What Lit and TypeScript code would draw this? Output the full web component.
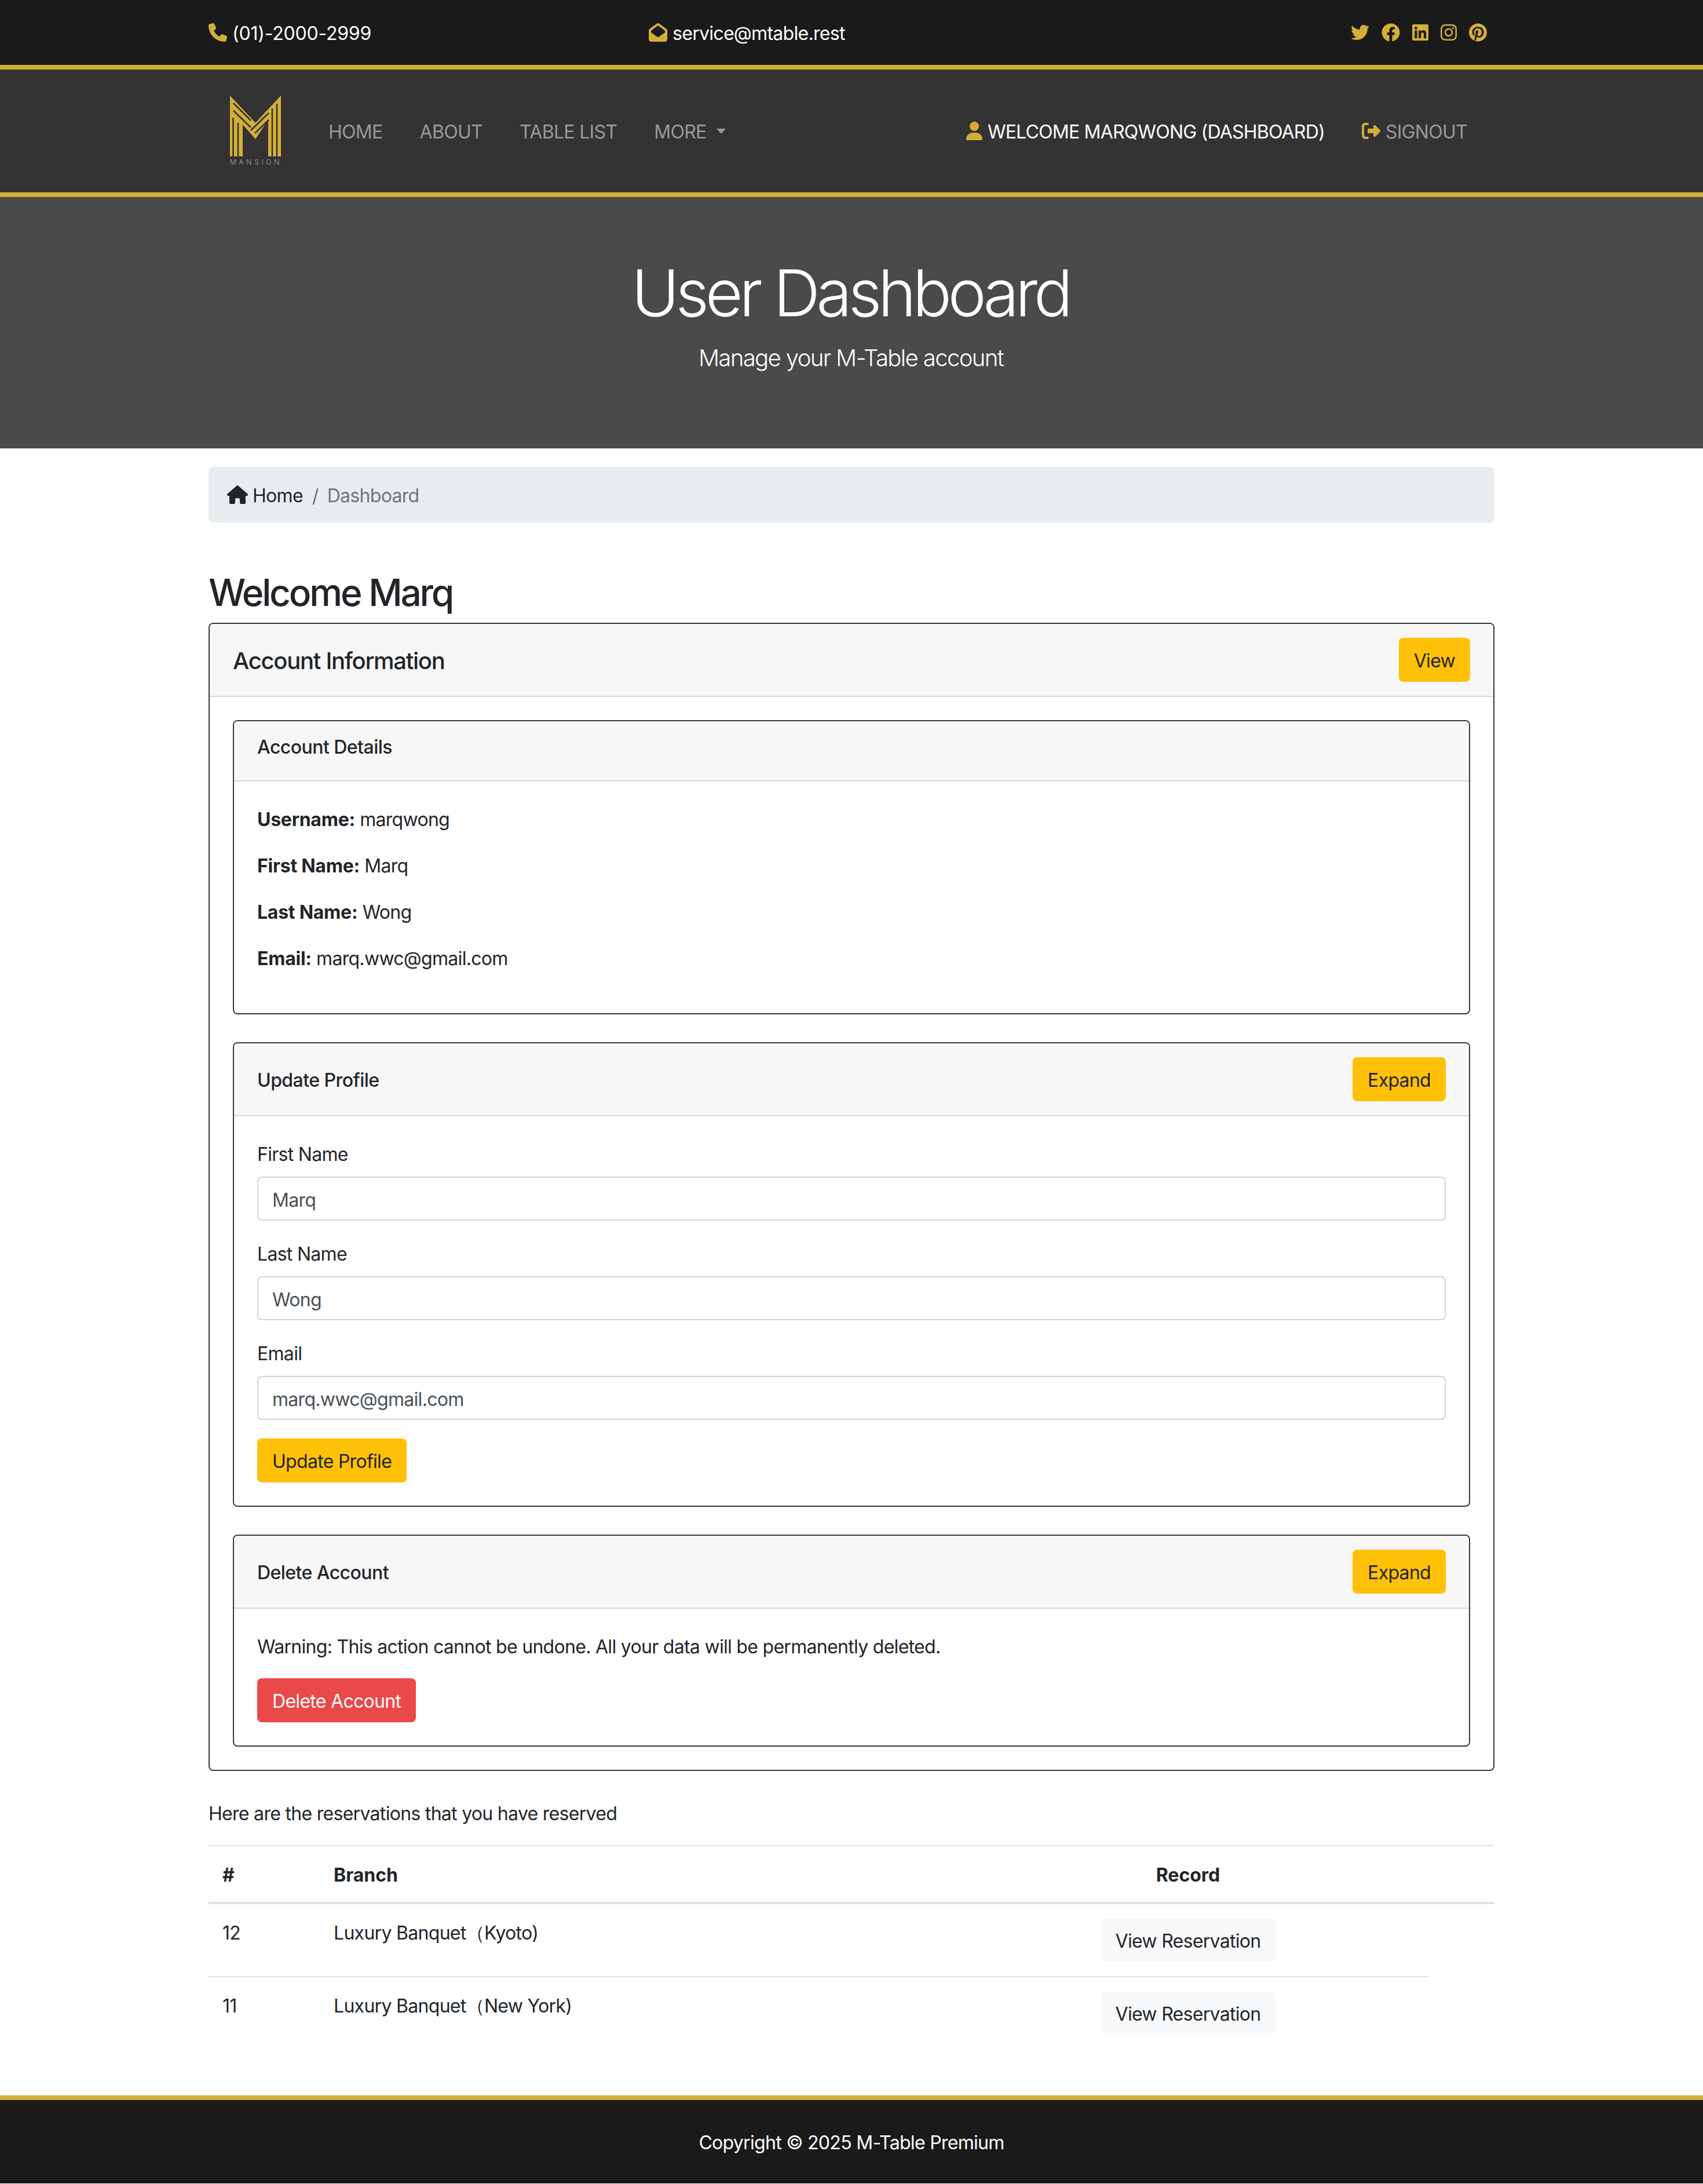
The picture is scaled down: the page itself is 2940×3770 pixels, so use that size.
import { css, html, LitElement, svg } from 'lit';
import { customElement } from 'lit/decorators.js';

// Font Awesome 6 outlines used across the page
const ICONS: Record<string, { w: number; d: string }> = {
    phone: { w: 512, d: 'M164.9 24.6c-7.7-18.6-28-28.5-47.4-23.2l-88 24C12.1 30.2 0 46 0 64C0 311.4 200.6 512 448 512c18 0 33.8-12.1 38.6-29.5l24-88c5.3-19.4-4.6-39.7-23.2-47.4l-96-40c-16.3-6.8-35.2-2.1-46.3 11.6L304.7 368C234.3 334.7 177.3 277.7 144 207.3L193.3 167c13.7-11.2 18.4-30 11.6-46.3l-40-96z' },
    envelope: { w: 512, d: 'M64 208.1L256 65.9 448 208.1v47.4L289.5 373c-9.7 7.2-21.4 11-33.5 11s-23.8-3.9-33.5-11L64 255.5V208.1zM256 0c-12.1 0-23.8 3.9-33.5 11L25.9 156.7C9.6 168.8 0 187.8 0 208.1V448c0 35.3 28.7 64 64 64H448c35.3 0 64-28.7 64-64V208.1c0-20.3-9.6-39.3-25.9-51.4L289.5 11C279.8 3.9 268.1 0 256 0z' },
    twitter: { w: 512, d: 'M459.37 151.716c.325 4.548.325 9.097.325 13.645 0 138.72-105.583 298.558-298.558 298.558-59.452 0-114.68-17.219-161.137-47.106 8.447.974 16.568 1.299 25.34 1.299 49.055 0 94.213-16.568 130.274-44.832-46.132-.975-84.792-31.188-98.112-72.772 6.498.974 12.995 1.624 19.818 1.624 9.421 0 18.843-1.3 27.614-3.573-48.081-9.747-84.143-51.98-84.143-102.985v-1.299c13.969 7.797 30.214 12.67 47.431 13.319-28.264-18.843-46.781-51.005-46.781-87.391 0-19.492 5.197-37.36 14.294-52.954 51.655 63.675 129.3 105.258 216.365 109.807-1.624-7.797-2.599-15.918-2.599-24.04 0-57.828 46.782-104.934 104.934-104.934 30.213 0 57.502 12.67 76.67 33.137 23.715-4.548 46.456-13.32 66.599-25.34-7.798 24.366-24.366 44.833-46.132 57.827 21.117-2.273 41.584-8.122 60.426-16.243-14.292 20.791-32.161 39.308-52.628 54.253z' },
    facebook: { w: 512, d: 'M504 256C504 119 393 8 256 8S8 119 8 256c0 123.78 90.69 226.38 209.25 245V327.69h-63V256h63v-54.64c0-62.15 37-96.48 93.67-96.48 27.14 0 55.52 4.84 55.52 4.84v61h-31.28c-30.8 0-40.41 19.12-40.41 38.73V256h68.78l-11 71.69h-57.78V501C413.31 482.38 504 379.78 504 256z' },
    linkedin: { w: 448, d: 'M416 32H31.9C14.3 32 0 46.5 0 64.3v383.4C0 465.5 14.3 480 31.9 480H416c17.6 0 32-14.5 32-32.3V64.3c0-17.8-14.4-32.3-32-32.3zM135.4 416H69V202.2h66.5V416zm-33.2-243c-21.3 0-38.5-17.3-38.5-38.5S80.9 96 102.2 96c21.2 0 38.5 17.3 38.5 38.5 0 21.3-17.2 38.5-38.5 38.5zm282.1 243h-66.4V312c0-24.8-.5-56.7-34.5-56.7-34.6 0-39.9 27-39.9 54.9V416h-66.4V202.2h63.7v29.2h.9c8.9-16.8 30.6-34.5 62.9-34.5 67.2 0 79.7 44.3 79.7 101.9V416z' },
    instagram: { w: 448, d: 'M224.1 141c-63.6 0-114.9 51.3-114.9 114.9s51.3 114.9 114.9 114.9S339 319.5 339 255.9 287.7 141 224.1 141zm0 189.6c-41.1 0-74.7-33.5-74.7-74.7s33.5-74.7 74.7-74.7 74.7 33.5 74.7 74.7-33.6 74.7-74.7 74.7zm146.4-194.3c0 14.9-12 26.8-26.8 26.8-14.9 0-26.8-12-26.8-26.8s12-26.8 26.8-26.8 26.8 12 26.8 26.8zm76.1 27.2c-1.7-35.9-9.9-67.7-36.2-93.9-26.2-26.2-58-34.4-93.9-36.2-37-2.1-147.9-2.1-184.9 0-35.8 1.7-67.6 9.9-93.9 36.1s-34.4 58-36.2 93.9c-2.1 37-2.1 147.9 0 184.9 1.7 35.9 9.9 67.7 36.2 93.9s58 34.4 93.9 36.2c37 2.1 147.9 2.1 184.9 0 35.9-1.7 67.7-9.9 93.9-36.2 26.2-26.2 34.4-58 36.2-93.9 2.1-37 2.1-147.8 0-184.8zM398.8 388c-7.8 19.6-22.9 34.7-42.6 42.6-29.5 11.7-99.5 9-132.1 9s-102.7 2.6-132.1-9c-19.6-7.8-34.7-22.9-42.6-42.6-11.7-29.5-9-99.5-9-132.1s-2.6-102.7 9-132.1c7.8-19.6 22.9-34.7 42.6-42.6 29.5-11.7 99.5-9 132.1-9s102.7-2.6 132.1 9c19.6 7.8 34.7 22.9 42.6 42.6 11.7 29.5 9 99.5 9 132.1s2.7 102.7-9 132.1z' },
    pinterest: { w: 496, d: 'M496 256c0 137-111 248-248 248-25.6 0-50.2-3.9-73.4-11.1 10.1-16.5 25.2-43.5 30.8-65 3-11.6 15.4-59 15.4-59 8.1 15.4 31.7 28.5 56.8 28.5 74.8 0 128.7-68.8 128.7-154.3 0-81.9-66.9-143.2-152.9-143.2-107 0-163.9 71.8-163.9 150.1 0 36.4 19.4 81.7 50.3 96.1 4.7 2.2 7.2 1.2 8.3-3.3.8-3.4 5-20.3 6.9-28.1.6-2.5.3-4.7-1.7-7.1-10.1-12.5-18.3-35.3-18.3-56.6 0-54.7 41.4-107.6 112-107.6 60.9 0 103.6 41.5 103.6 100.9 0 67.1-33.9 113.6-78 113.6-24.3 0-42.6-20.1-36.7-44.8 7-29.5 20.5-61.3 20.5-82.6 0-19-10.2-34.9-31.4-34.9-24.9 0-44.9 25.7-44.9 60.2 0 22 7.4 36.8 7.4 36.8s-24.5 103.8-29 123.2c-5 21.4-3 51.6-.9 71.2C65.4 450.9 0 361.1 0 256 0 119 111 8 248 8s248 111 248 248z' },
    home: { w: 576, d: 'M575.8 255.5c0 18-15 32.1-32 32.1h-32l.7 160.2c0 2.7-.2 5.4-.5 8.1V472c0 22.1-17.9 40-40 40H456c-1.1 0-2.2 0-3.3-.1c-1.4 .1-2.8 .1-4.2 .1H416 392c-22.1 0-40-17.9-40-40V448 384c0-17.7-14.3-32-32-32H256c-17.7 0-32 14.3-32 32v64 24c0 22.1-17.9 40-40 40H160 128.1c-1.5 0-3-.1-4.5-.2c-1.2 .1-2.4 .2-3.6 .2H104c-22.1 0-40-17.9-40-40V360c0-.9 0-1.9 .1-2.8V287.6H32c-18 0-32-14-32-32.1c0-9 3-17 10-24L266.4 8c7-7 15-8 22-8s15 2 21 7L564.8 231.5c8 7 12 15 11 24z' },
    user: { w: 448, d: 'M224 256A128 128 0 1 0 224 0a128 128 0 1 0 0 256zm-45.7 48C79.8 304 0 383.8 0 482.3C0 498.7 13.3 512 29.7 512H418.3c16.4 0 29.7-13.3 29.7-29.7C448 383.8 368.2 304 269.7 304H178.3z' },
    signout: { w: 512, d: 'M377.9 105.9L500.7 228.7c7.2 7.2 11.3 17.1 11.3 27.3s-4.1 20.1-11.3 27.3L377.9 406.1c-6.4 6.4-15 9.9-24 9.9c-18.7 0-33.9-15.2-33.9-33.9l0-62.1-128 0c-17.7 0-32-14.3-32-32l0-64c0-17.7 14.3-32 32-32l128 0 0-62.1c0-18.7 15.2-33.9 33.9-33.9c9 0 17.6 3.6 24 9.9zM160 96L96 96c-17.7 0-32 14.3-32 32l0 256c0 17.7 14.3 32 32 32l64 0c17.7 0 32 14.3 32 32s-14.3 32-32 32l-64 0c-53 0-96-43-96-96L0 128C0 75 43 32 96 32l64 0c17.7 0 32 14.3 32 32s-14.3 32-32 32z' },
};

const NAV_LINKS = ['HOME', 'ABOUT', 'TABLE LIST'];
const SOCIALS = ['twitter', 'facebook', 'linkedin', 'instagram', 'pinterest'];
const DETAILS = [
    ['Username:', 'marqwong'],
    ['First Name:', 'Marq'],
    ['Last Name:', 'Wong'],
    ['Email:', 'marq.wwc@gmail.com'],
];
const FIELDS = [
    ['First Name', 'Marq'],
    ['Last Name', 'Wong'],
    ['Email', 'marq.wwc@gmail.com'],
];
const RESERVATIONS = [
    ['12', 'Luxury Banquet（Kyoto)'],
    ['11', 'Luxury Banquet（New York)'],
];

const icon = (name: string) => {
    const i = ICONS[name];
    return html`<svg class="icon" style="width:${(i.w / 512) * 32}px" viewBox="0 0 ${i.w} 512" fill="currentColor" fill-rule="evenodd">
        ${svg`<path d=${i.d}></path>`}
    </svg>`;
};

@customElement('app-root')
export class AppRoot extends LitElement {
    static override styles = css`
        :host {
            display: block;
            font-family: Inter, 'Liberation Sans', sans-serif;
            font-size: 32px;
            line-height: 48px;
            letter-spacing: -0.7px;
            color: #212529;
            background: #fff;
        }

        * {
            box-sizing: border-box;
        }

        .container {
            width: 2220px;
            margin: 0 auto;
        }

        .icon {
            height: 32px;
            display: block;
            flex: none;
        }

        .gold {
            color: #d4af37;
        }

        /* Inter sits a little higher than the original font: nudge text in centered rows */
        .t {
            padding-top: 4px;
        }

        .phone {
            letter-spacing: -0.2px;
        }

        .item {
            display: flex;
            align-items: center;
            gap: 9px;
        }

        .topbar {
            background: #1a1a1a;
            border-bottom: 8px solid #d4af37;
            color: #fff;
        }

        .topbar-row {
            height: 112px;
            display: grid;
            grid-template-columns: 760px 1fr auto;
            align-items: center;
        }

        .socials {
            display: flex;
            align-items: center;
            gap: 21px;
            padding-right: 13px;
            color: #d4af37;
        }

        .navbar {
            background: #333;
            border-bottom: 8px solid #d4af37;
        }

        .nav-row {
            height: 212px;
            display: flex;
            align-items: center;
            padding-right: 15px;
            color: #999;
        }

        .brand {
            width: 175px;
            padding-left: 37px;
            flex: none;
        }

        .logo {
            width: 89px;
            height: 105px;
            display: block;
        }

        .logo-text {
            width: 89px;
            margin-top: 3px;
            font-size: 12px;
            line-height: 14px;
            font-weight: 200;
            letter-spacing: 4.8px;
            color: #ddd;
            white-space: nowrap;
        }

        .nav-link {
            padding: 0 32px;
            display: flex;
            align-items: center;
        }

        .caret {
            width: 0;
            height: 0;
            margin-left: 17px;
            border-top: 9.6px solid currentColor;
            border-left: 8.16px solid transparent;
            border-right: 8.16px solid transparent;
        }

        .spacer {
            flex: 1;
        }

        .white {
            color: #fff;
            letter-spacing: -0.78px;
        }

        .hero {
            background: #4a4a4a;
            color: #fff;
            text-align: center;
            padding: 98px 0 126px;
        }

        .hero h1 {
            margin: 0 0 16px;
            padding-right: 4px;
            font-size: 112px;
            line-height: 134px;
            font-weight: 300;
            letter-spacing: -6.4px;
        }

        .hero p {
            margin: 0;
            padding-right: 2px;
            font-size: 40px;
            line-height: 60px;
            font-weight: 300;
            letter-spacing: -1.6px;
        }

        .breadcrumb {
            margin-top: 32px;
            padding: 24px 32px;
            height: 96px;
            background: #e9ecef;
            border-radius: 8px;
            display: flex;
            align-items: center;
        }

        .crumb-home {
            gap: 8px;
        }

        .crumb-sep {
            padding: 4px 15px 0 16px;
            color: #6c757d;
        }

        .crumb-current {
            color: #6c757d;
        }

        .welcome {
            margin: 82px 0 14px;
            font-size: 64px;
            line-height: 77px;
            font-weight: 500;
            letter-spacing: -3.2px;
        }

        .card {
            border: 2px solid #343a40;
            border-radius: 8px;
            background: #fff;
            overflow: hidden;
        }

        .card + .card {
            margin-top: 48px;
        }

        .card-header {
            background: #f7f7f7;
            border-bottom: 2px solid #d4d8dc;
            padding: 24px 40px;
            display: flex;
            align-items: center;
            justify-content: space-between;
        }

        .card-title {
            margin: 0;
            padding-top: 4px;
            font-size: 40px;
            line-height: 48px;
            font-weight: 500;
            letter-spacing: -1.3px;
        }

        .sub-title {
            font-size: 32px;
            line-height: 38px;
            font-weight: 500;
            letter-spacing: -0.55px;
            margin: 0;
            padding-top: 4px;
        }

        .card-header.plain {
            display: block;
        }

        .card-header.plain .sub-title {
            padding-top: 2px;
            margin-bottom: 14px;
        }

        .card-body {
            padding: 40px;
        }

        .card-body p {
            margin: 0 0 30px;
            padding-top: 2px;
        }

        .card-body b {
            font-weight: 700;
            letter-spacing: -0.25px;
        }

        .field {
            margin-bottom: 32px;
        }

        .field label {
            display: block;
            padding-top: 2px;
            margin-bottom: 14px;
        }

        .field input {
            display: block;
            width: 100%;
            height: 76px;
            padding: 14px 24px 10px;
            font: inherit;
            letter-spacing: inherit;
            color: #495057;
            background: #fff;
            border: 2px solid #ced4da;
            border-radius: 8px;
        }

        .btn {
            display: inline-block;
            padding: 14px 24px 10px;
            font: inherit;
            letter-spacing: inherit;
            color: #212529;
            background: #ffc107;
            border: 2px solid transparent;
            border-radius: 8px;
            white-space: nowrap;
        }

        .btn.danger {
            background: #ea4949;
            color: #fff;
        }

        .btn.light {
            background: #f8f9fa;
        }

        .intro {
            margin: 48px 0 30px;
            padding-top: 2px;
        }

        table {
            width: 100%;
            table-layout: fixed;
            border-collapse: separate;
            border-spacing: 0;
        }

        th,
        td {
            padding: 26px 24px 22px;
            text-align: left;
            vertical-align: top;
        }

        th {
            font-weight: 700;
            letter-spacing: 0;
            border-top: 2px solid #dee2e6;
            border-bottom: 4px solid #dee2e6;
        }

        td.center {
            padding: 24px;
        }

        tbody tr + tr td {
            border-top: 2px solid #dee2e6;
        }

        .center {
            text-align: center;
        }

        .footer {
            margin-top: 80px;
            background: #1a1a1a;
            border-top: 8px solid #d4af37;
            color: #fff;
            text-align: center;
            padding: 50px 0 46px;
        }
    `;

    private _renderLogo() {
        return html`<svg class="logo" viewBox="0 0 89 105">
            <path d="M0 0L44 47L88 0V105H66V42L44 75L22 50V105H0Z" fill="#d4af37"></path>
            <g fill="none" stroke="#333" stroke-width="2.6">
                <path d="M6 13L36 43M6 26L36 55M5.5 38V105M14 47V105"></path>
                <path d="M73 22V105M81 14V105M67 30L36 60M67 42L43 65"></path>
            </g>
        </svg>`;
    }

    private _renderDetails() {
        return html`
            <div class="card">
                <div class="card-header plain"><h5 class="sub-title">Account Details</h5></div>
                <div class="card-body">
                    ${DETAILS.map(([k, v]) => html`<p><b>${k}</b> ${v}</p>`)}
                </div>
            </div>
        `;
    }

    private _renderProfile() {
        return html`
            <div class="card">
                <div class="card-header">
                    <h5 class="sub-title">Update Profile</h5>
                    <button class="btn">Expand</button>
                </div>
                <div class="card-body">
                    ${FIELDS.map(
                        ([label, value]) => html`
                            <div class="field">
                                <label>${label}</label>
                                <input type="text" .value=${value} />
                            </div>
                        `
                    )}
                    <button class="btn">Update Profile</button>
                </div>
            </div>
        `;
    }

    private _renderDelete() {
        return html`
            <div class="card">
                <div class="card-header">
                    <h5 class="sub-title">Delete Account</h5>
                    <button class="btn">Expand</button>
                </div>
                <div class="card-body">
                    <p>Warning: This action cannot be undone. All your data will be permanently deleted.</p>
                    <button class="btn danger">Delete Account</button>
                </div>
            </div>
        `;
    }

    private _renderTable() {
        return html`
            <table>
                <colgroup>
                    <col style="width:192px" />
                    <col style="width:1084px" />
                    <col style="width:830px" />
                    <col style="width:114px" />
                </colgroup>
                <thead>
                    <tr>
                        <th>#</th>
                        <th>Branch</th>
                        <th class="center">Record</th>
                        <th></th>
                    </tr>
                </thead>
                <tbody>
                    ${RESERVATIONS.map(
                        ([id, branch]) => html`
                            <tr>
                                <td>${id}</td>
                                <td>${branch}</td>
                                <td class="center"><button class="btn light">View Reservation</button></td>
                            </tr>
                        `
                    )}
                </tbody>
            </table>
        `;
    }

    override render() {
        return html`
            <div class="topbar">
                <div class="container topbar-row">
                    <div class="item"><span class="gold">${icon('phone')}</span><span class="t phone">(01)-2000-2999</span></div>
                    <div class="item"><span class="gold">${icon('envelope')}</span><span class="t">service@mtable.rest</span></div>
                    <div class="socials">${SOCIALS.map(s => icon(s))}</div>
                </div>
            </div>
            <div class="navbar">
                <div class="container nav-row">
                    <div class="brand">
                        ${this._renderLogo()}
                        <div class="logo-text">MANSION</div>
                    </div>
                    ${NAV_LINKS.map(l => html`<div class="nav-link"><span class="t">${l}</span></div>`)}
                    <div class="nav-link"><span class="t">MORE</span><span class="caret"></span></div>
                    <div class="spacer"></div>
                    <div class="nav-link item white"><span class="gold">${icon('user')}</span><span class="t">WELCOME MARQWONG (DASHBOARD)</span></div>
                    <div class="nav-link item"><span class="gold">${icon('signout')}</span><span class="t">SIGNOUT</span></div>
                </div>
            </div>
            <div class="hero">
                <h1>User Dashboard</h1>
                <p>Manage your M-Table account</p>
            </div>
            <div class="container">
                <div class="breadcrumb">
                    <div class="item crumb-home">${icon('home')}<span class="t">Home</span></div>
                    <span class="crumb-sep">/</span>
                    <span class="crumb-current t">Dashboard</span>
                </div>
                <h2 class="welcome">Welcome Marq</h2>
                <div class="card">
                    <div class="card-header">
                        <h4 class="card-title">Account Information</h4>
                        <button class="btn">View</button>
                    </div>
                    <div class="card-body">
                        ${this._renderDetails()} ${this._renderProfile()} ${this._renderDelete()}
                    </div>
                </div>
                <p class="intro">Here are the reservations that you have reserved</p>
                ${this._renderTable()}
            </div>
            <div class="footer">Copyright © 2025 M-Table Premium</div>
        `;
    }
}
